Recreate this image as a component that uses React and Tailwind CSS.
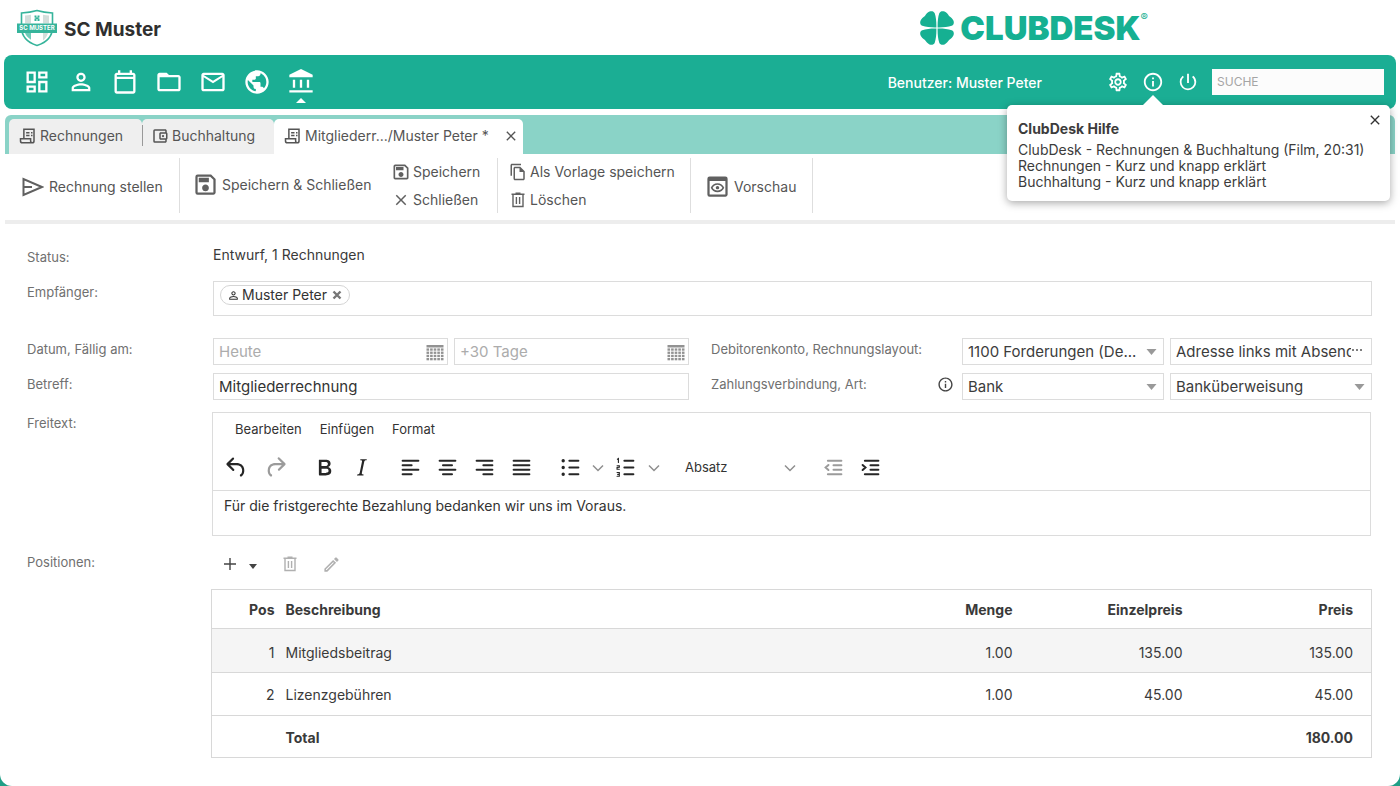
import React from 'react';
import {
  MdOutlineDashboard,
  MdPersonOutline,
  MdFolderOpen,
  MdMailOutline,
  MdPublic,
  MdOutlineSettings,
  MdInfoOutline,
  MdPowerSettingsNew,
  MdOutlineAccountBalanceWallet,
  MdOutlineSave,
  MdClose,
  MdOutlineFileCopy,
  MdOutlinePreview,
  MdOutlineEdit,
} from 'react-icons/md';

const BankIcon = ({ className = '' }) => (
  <svg viewBox="0 0 24 24" fill="currentColor" className={className}>
    <path d="M12 .8 2 5.800V8h20V5.800zM5 10h2v7H5zM11 10h2v7h-2zM17 10h2v7h-2zM2 19h20v2H2z" />
  </svg>
);

const CalendarIcon = ({ className = '' }) => (
  <svg viewBox="0 0 24 24" fill="currentColor" className={className}>
    <path fillRule="evenodd" d="M19 4h-1V2h-2v2H8V2H6v2H5c-1.100 0-2 .9-2 2v14c0 1.100.9 2 2 2h14c1.100 0 2-.9 2-2V6c0-1.100-.9-2-2-2zm0 16H5V9.500h14V20zM5 7.500V6h14v1.500z" />
  </svg>
);

const ReceiptIcon = ({ className = '' }) => (
  <svg viewBox="0 0 24 24" fill="none" stroke="currentColor" strokeWidth="2" className={className}>
    <path d="M6.500 15.500V3H20v15.500c0 1.400-1 2.500-2.300 2.500s-2.200-1.100-2.200-2.500v-3H2v3C2 19.900 3.100 21 4.500 21h13" />
    <path d="M9.500 7.500h4.500M16 7.500h2M9.500 11.200h4.500M16 11.200h2" />
  </svg>
);

const SendIcon = ({ className = '' }) => (
  <svg viewBox="0 0 22 20" fill="none" stroke="currentColor" strokeWidth="2" className={className}>
    <path d="M1.500 2v16L20 10 1.500 2zM1.500 10H10" />
  </svg>
);

const TrashIcon = ({ className = '' }) => (
  <svg viewBox="0 0 16 16" fill="none" stroke="currentColor" strokeWidth="1.400" className={className}>
    <path d="M1.500 2.200h13M5.500 1.200h5M3 2.500v12h10v-12M6.400 5v7M9.600 5v7" />
  </svg>
);

const CalendarGrid = ({ className = '' }) => (
  <svg viewBox="0 0 18 17" fill="currentColor" className={className}>
    <path d="M.5 1h17v2.500H.5z" />
    {[4.4, 7.6, 10.8, 14].map((y) =>
      [0.5, 4.1, 7.7, 11.3, 14.9].map((x) => <rect key={`${x}-${y}`} x={x} y={y} width="2.6" height="2.3" />)
    )}
  </svg>
);

const Triangle = ({ className = '' }) => (
  <svg viewBox="0 0 10 6" fill="currentColor" className={className}>
    <path d="M0 0h10L5 6z" />
  </svg>
);

const Chevron = ({ className = '' }) => (
  <svg viewBox="0 0 12 8" fill="none" stroke="currentColor" strokeWidth="1.500" className={className}>
    <path d="m1 1.500 5 5 5-5" />
  </svg>
);

const ClubLogo = () => (
  <svg viewBox="0 0 40 38" className="h-[38px] w-10">
    <path d="M20 1.500c5 1.500 10 2.200 15.500 2.500v14c0 10-6 15.500-15.500 18.500C10.500 33.500 4.500 28 4.500 18V4C10 3.700 15 3 20 1.500z" fill="#fff" stroke="#36b49b" strokeWidth="1.600" />
    <path d="M8 6.500c2-.1 4-.4 6-.8v8.800H8zM26 24h5c-1 3.500-2.500 5.500-5 7.400z" fill="#d3dedb" />
    <path d="M26 5.700c2 .4 4 .7 6 .8v8h-6z" fill="#d3dedb" />
    <path d="M8 24h6v6.800C10.500 28.500 9 26.500 8 24z" fill="#6fcbb8" />
    <path d="M17.500 6.500h2v2h1v-2h2v2h-1v1h1v2.500h-2v-2h-1v2h-2V9.500h1v-1h-1z" fill="#36b49b" />
    <path d="M0 14.500h40V24H0z" fill="#36b49b" />
    <text x="20" y="21.400" textAnchor="middle" fontSize="6" fontWeight="700" fill="#fff" fontFamily="Inter, sans-serif">
      SC MUSTER
    </text>
  </svg>
);

const leaf = 'M15.900 15.900C11 16 6 15.600 2.200 14.300C0 13.400-.2 11 .6 9.200C1.400 7.300 3 6 4.800 4.800C6 3 7.300 1.400 9.200.6C11-.2 13.400 0 14.300 2.200C15.600 6 16 11 15.900 15.900z';

const CloverIcon = () => (
  <svg viewBox="0 0 33 33" fill="#16b092" className="h-[34px] w-[34px]">
    {[0, 90, 180, 270].map((angle) => (
      <path key={angle} d={leaf} transform={`rotate(${angle} 16.500 16.500)`} />
    ))}
  </svg>
);

// 24px glyphs of the rich text editor
const filledIcons = {
  undo: 'M6.400 8H12c3.700 0 6.200 2 6.800 5.100.6 2.700-.4 5.600-2.300 6.800a1 1 0 0 1-1-1.800c1.100-.6 1.800-2.700 1.400-4.600-.5-2.100-2.100-3.500-4.900-3.500H6.400l3.300 3.300a1 1 0 1 1-1.400 1.400l-5-5a1 1 0 0 1 0-1.400l5-5a1 1 0 0 1 1.400 1.400L6.400 8z',
  redo: 'M17.600 10H12c-2.800 0-4.400 1.400-4.900 3.500-.4 2 .3 4 1.400 4.600a1 1 0 1 1-1 1.800c-2-1.200-2.900-4.100-2.300-6.800.6-3 3-5.100 6.800-5.100h5.600l-3.300-3.300a1 1 0 1 1 1.400-1.400l5 5a1 1 0 0 1 0 1.400l-5 5a1 1 0 0 1-1.400-1.400l3.300-3.300z',
  bold: 'M7.800 19c-.3 0-.5 0-.6-.2l-.2-.5V5.700c0-.2 0-.4.2-.5l.6-.2h5c1.500 0 2.700.3 3.500 1 .7.6 1.100 1.400 1.100 2.500a3 3 0 0 1-.6 1.900c-.4.6-1 1-1.600 1.200.4.1.9.3 1.300.6s.8.7 1 1.200c.4.4.5 1 .5 1.600 0 1.300-.4 2.300-1.300 3-.8.7-2.100 1-3.800 1H7.800zm5-8.300c.6 0 1.200-.1 1.600-.5.4-.3.6-.7.6-1.300 0-1.100-.8-1.700-2.300-1.700H9.300v3.500h3.400zm.5 6c.7 0 1.300-.1 1.700-.4.4-.4.6-.9.6-1.500s-.2-1-.7-1.400c-.4-.3-1-.4-2-.4H9.400v3.800h4z',
  italic: 'm16.700 4.700-.1.9h-.3c-.6 0-1 0-1.400.3-.3.3-.4.6-.5 1.100l-2.100 9.800v.6c0 .5.4.8 1.400.8h.2l-.2.8H8l.2-.8h.2c1.100 0 1.800-.5 2-1.500l2-9.800.1-.5c0-.6-.4-.8-1.400-.8h-.3l.2-.9h5.800z',
};

const strokeIcons = {
  left: 'M5 6h14M5 10h8M5 14h14M5 18h8',
  center: 'M5 6h14M8 10h8M5 14h14M8 18h8',
  right: 'M5 6h14M11 10h8M5 14h14M11 18h8',
  justify: 'M5 6h14M5 10h14M5 14h14M5 18h14',
  bullets: 'M11 6h8M11 12h8M11 18h8',
  numbers: 'M11 6h8M11 12h8M11 18h8',
  outdent: 'M7 6h12M12 10h7M12 14h7M7 18h12M7.500 9.800 5 12l2.500 2.200',
  indent: 'M7 6h12M12 10h7M12 14h7M7 18h12M5 9.800 7.500 12 5 14.200',
};

const EditorButton = ({ icon, label, muted = false }) => (
  <button
    type="button"
    aria-label={label}
    className={`flex h-8 w-[37px] items-center justify-center ${muted ? 'text-[#9b9b9b]' : 'text-[#262626]'}`}
  >
    {strokeIcons[icon] ? (
      <svg viewBox="0 0 24 24" fill="none" stroke="currentColor" strokeWidth="1.800" strokeLinecap="round" className="h-[27px] w-[27px]">
        <path d={strokeIcons[icon]} />
        {icon === 'bullets' && <path strokeWidth="3" d="M5.500 6h.01M5.500 12h.01M5.500 18h.01" />}
        {icon === 'numbers' && (
          <path strokeWidth="1" d="m4.800 4.700.9-.6v3.400M4.500 10.400h2v1.300l-2 .3v1.500h2M4.500 16.400h2v3.400h-2M5 18.100h1.500" />
        )}
      </svg>
    ) : (
      <svg viewBox="0 0 24 24" fill="currentColor" className="h-[27px] w-[27px]">
        <path fillRule="evenodd" d={filledIcons[icon]} />
      </svg>
    )}
  </button>
);

const navItems = [
  { label: 'Dashboard', Icon: MdOutlineDashboard },
  { label: 'Kontakte', Icon: MdPersonOutline },
  { label: 'Kalender', Icon: CalendarIcon },
  { label: 'Dateien', Icon: MdFolderOpen },
  { label: 'E-Mail', Icon: MdMailOutline },
  { label: 'Website', Icon: MdPublic },
  { label: 'Finanzen', Icon: BankIcon, active: true },
];

const positions = [
  { pos: 1, text: 'Mitgliedsbeitrag', amount: '1.00', unit: '135.00', price: '135.00' },
  { pos: 2, text: 'Lizenzgebühren', amount: '1.00', unit: '45.00', price: '45.00' },
];

const ToolbarButton = ({ Icon, iconClass, children, className = '' }) => (
  <button type="button" className={`flex items-center whitespace-nowrap ${className}`}>
    <Icon className={`shrink-0 text-[#606060] ${iconClass}`} />
    {children}
  </button>
);

const DateField = ({ label, placeholder }) => (
  <div className="flex h-[27px] min-w-0 flex-1 items-center border border-[#dcdcdc] bg-white pr-[3px] pl-[5px]">
    <input aria-label={label} placeholder={placeholder} className="w-full min-w-0 text-[15px] placeholder-[#acacac] outline-none" />
    <button type="button" aria-label={`${label} wählen`} className="pt-[2px] text-[#929292]">
      <CalendarGrid className="h-[17px] w-[18px]" />
    </button>
  </div>
);

const SelectField = ({ label, value, dots = false }) => (
  <div className="flex h-[27px] min-w-0 flex-1 items-center border border-[#dcdcdc] bg-white pr-[6px] pl-[5px]">
    <select aria-label={label} className="min-w-0 flex-1 appearance-none overflow-hidden text-[15px] text-[#3c3c3c] outline-none">
      <option>{value}</option>
    </select>
    {dots ? (
      <svg viewBox="0 0 12 4" fill="#555" className="mr-[2px] mb-1 h-1 w-3 shrink-0">
        <circle cx="2" cy="2" r="1" />
        <circle cx="6" cy="2" r="1" />
        <circle cx="10" cy="2" r="1" />
      </svg>
    ) : (
      <Triangle className="h-[6px] w-[11px] shrink-0 text-[#999]" />
    )}
  </div>
);

const HelpPopover = () => (
  <div className="absolute top-[50px] right-[6px] z-10 w-[383px] rounded-[5px] bg-white px-[11px] pt-[14px] pb-[11px] text-[#3c3c3c] shadow-[0_2px_8px_rgba(0,0,0,0.35)]">
    <svg viewBox="0 0 22 11" fill="#fff" className="absolute -top-[10px] left-[135px] h-[11px] w-[22px]">
      <path d="M11 0 22 11H0z" />
    </svg>
    <button type="button" aria-label="Hilfe schließen" className="absolute top-[7px] right-[7px] text-[#333]">
      <MdClose className="h-4 w-4" />
    </button>
    <h2 className="mb-[3px] text-[14px] leading-5 font-bold">ClubDesk Hilfe</h2>
    <ul className="text-[14px] leading-4 whitespace-nowrap">
      <li><a href="#film">ClubDesk - Rechnungen &amp; Buchhaltung (Film, 20:31)</a></li>
      <li><a href="#rechnungen">Rechnungen - Kurz und knapp erklärt</a></li>
      <li><a href="#buchhaltung">Buchhaltung - Kurz und knapp erklärt</a></li>
    </ul>
  </div>
);

const Header = () => (
  <header>
    <div className="flex h-[55px] items-center pr-[252px] pl-[17px]">
      <ClubLogo />
      <span className="ml-[7px] pt-[6px] text-[19px] font-bold text-[#2f2f2f]">SC Muster</span>
      <div className="ml-auto flex items-center text-[#16b092]">
        <CloverIcon />
        <span className="ml-[6px] pt-[2px] text-[33px] leading-none font-black">CLUBDESK</span>
        <span className="self-start pt-[2px] text-[11px] leading-none">®</span>
      </div>
    </div>

    <div className="relative mx-1 flex h-[54px] items-center rounded-lg bg-[#1bae94] pr-3 pl-[19px] text-white">
      <nav className="flex gap-4">
        {navItems.map(({ label, Icon, active }) => (
          <a key={label} href="#nav" aria-label={label} className="relative block">
            <Icon className="h-7 w-7" />
            {active && (
              <svg viewBox="0 0 10 5" fill="currentColor" className="absolute -bottom-[7px] left-[9px] h-[5px] w-[10px]">
                <path d="M5 0l5 5H0z" />
              </svg>
            )}
          </a>
        ))}
      </nav>
      <span className="mr-[65px] ml-auto text-[14px] font-medium">Benutzer: Muster Peter</span>
      <div className="flex gap-[13px]">
        <button type="button" aria-label="Einstellungen"><MdOutlineSettings className="h-[22px] w-[22px]" /></button>
        <button type="button" aria-label="Hilfe"><MdInfoOutline className="h-[22px] w-[22px]" /></button>
        <button type="button" aria-label="Abmelden"><MdPowerSettingsNew className="h-[22px] w-[22px]" /></button>
      </div>
      <input
        type="search"
        aria-label="Suche"
        placeholder="SUCHE"
        className="ml-[13px] h-[26px] w-[172px] bg-[#fcfcfc] px-[5px] pb-[2px] text-[12px] text-[#333] placeholder-[#a5a5a5] outline-none"
      />
      <HelpPopover />
    </div>
  </header>
);

const Tabs = () => (
  <div className="mx-[5px] mt-[6px] flex h-[39px] items-end rounded-t-md bg-[#8ad3c7] pl-1 text-[14px] text-[#555]">
    <a href="#rechnungen" className="flex h-[35px] w-[133px] items-center rounded-t-[5px] bg-[#efefef] pb-[2px] pl-[10px]">
      <ReceiptIcon className="mr-[3px] h-[18px] w-[18px]" />
      Rechnungen
    </a>
    <a href="#buchhaltung" className="flex h-[35px] w-[132px] items-center rounded-t-[5px] bg-[#efefef] pb-[2px]">
      <span className="h-[21px] w-px bg-[#999]" />
      <MdOutlineAccountBalanceWallet className="mr-[3px] ml-2 h-[18px] w-[18px]" />
      Buchhaltung
    </a>
    <div className="flex h-[35px] w-[249px] items-center rounded-t-[5px] bg-white pr-1 pb-[2px] pl-[10px]">
      <ReceiptIcon className="mr-[3px] h-[18px] w-[18px]" />
      Mitgliederr.../Muster Peter *
      <button type="button" aria-label="Tab schließen" className="ml-auto"><MdClose className="h-4 w-4" /></button>
    </div>
  </div>
);

const Toolbar = () => (
  <div className="mx-[5px] flex h-[70px] border-b-4 border-[#ededed] pt-1 pb-[7px] text-[14px] text-[#555]">
    <div className="flex w-[175px] items-center border-r border-[#dedede] pt-[2px] pl-[17px]">
      <ToolbarButton Icon={SendIcon} iconClass="mr-[5px] h-5 w-[22px]">Rechnung stellen</ToolbarButton>
    </div>
    <div className="flex w-[318px] items-center border-r border-[#dedede] pl-3">
      <ToolbarButton Icon={MdOutlineSave} iconClass="mr-[3px] h-[27px] w-[27px]" className="w-[199px] pb-[2px]">Speichern &amp; Schließen</ToolbarButton>
      <div className="flex flex-col gap-[7px]">
        <ToolbarButton Icon={MdOutlineSave} iconClass="mr-[2px] h-5 w-5">Speichern</ToolbarButton>
        <ToolbarButton Icon={MdClose} iconClass="mr-[3px] ml-[1px] h-[18px] w-[18px]">Schließen</ToolbarButton>
      </div>
    </div>
    <div className="flex w-[193px] flex-col justify-center gap-[7px] border-r border-[#dedede] pl-[11px]">
      <ToolbarButton Icon={MdOutlineFileCopy} iconClass="mr-[3px] h-[18px] w-[18px]">Als Vorlage speichern</ToolbarButton>
      <ToolbarButton Icon={TrashIcon} iconClass="mr-[4px] ml-[1px] h-4 w-4">Löschen</ToolbarButton>
    </div>
    <div className="flex w-[122px] items-center border-r border-[#dedede] pt-[2px] pl-[13px]">
      <ToolbarButton Icon={MdOutlinePreview} iconClass="mr-[3px] h-[27px] w-[27px]">Vorschau</ToolbarButton>
    </div>
  </div>
);

const Editor = () => (
  <div className="mr-px -ml-px border border-[#dcdcdc] bg-white text-[#333]">
    <div className="flex gap-[18px] pt-[6px] pl-[22px] text-[13px] leading-5">
      <button type="button">Bearbeiten</button>
      <button type="button">Einfügen</button>
      <button type="button">Format</button>
    </div>
    <div className="flex h-[52px] items-center gap-3 border-b border-[#dcdcdc] pt-[6px] pl-[5px]">
      <div className="flex gap-[2px]">
        <EditorButton icon="undo" label="Rückgängig" />
        <EditorButton icon="redo" label="Wiederholen" muted />
      </div>
      <div className="flex">
        <EditorButton icon="bold" label="Fett" />
        <EditorButton icon="italic" label="Kursiv" />
      </div>
      <div className="flex">
        <EditorButton icon="left" label="Linksbündig" />
        <EditorButton icon="center" label="Zentriert" />
        <EditorButton icon="right" label="Rechtsbündig" />
        <EditorButton icon="justify" label="Blocksatz" />
      </div>
      <div className="flex items-center text-[#8f8f8f]">
        <EditorButton icon="bullets" label="Aufzählung" />
        <button type="button" aria-label="Aufzählungsart" className="flex w-[18px] justify-center"><Chevron className="h-2 w-3" /></button>
        <EditorButton icon="numbers" label="Nummerierung" />
        <button type="button" aria-label="Nummerierungsart" className="flex w-5 justify-center"><Chevron className="h-2 w-3" /></button>
      </div>
      <button type="button" className="ml-[9px] flex w-[111px] items-center justify-between text-[13px]">
        Absatz
        <Chevron className="h-2 w-3 text-[#8f8f8f]" />
      </button>
      <div className="ml-[7px] flex">
        <EditorButton icon="outdent" label="Einzug verkleinern" muted />
        <EditorButton icon="indent" label="Einzug vergrößern" />
      </div>
    </div>
    <div contentEditable suppressContentEditableWarning role="textbox" aria-label="Freitext" className="h-11 px-[11px] pt-[5px] text-[14px] leading-5 outline-none">
      Für die fristgerechte Bezahlung bedanken wir uns im Voraus.
    </div>
  </div>
);

const PositionsTable = () => (
  <table className="-ml-[2px] w-[calc(100%+2px)] border-collapse border border-[#d8d8d8] bg-white text-right text-[14px] text-[#3a3a3a]">
    <thead>
      <tr className="h-[39px] border-b border-[#d8d8d8]">
        <th className="w-[63px]">Pos</th>
        <th className="pl-[11px] text-left">Beschreibung</th>
        <th className="w-[170px]">Menge</th>
        <th className="w-[170px]">Einzelpreis</th>
        <th className="w-[189px] pr-[18px]">Preis</th>
      </tr>
    </thead>
    <tbody>
      {positions.map((row) => (
        <tr key={row.pos} className="h-[43px] border-b border-[#d8d8d8] odd:h-11 odd:bg-[#f5f5f5] odd:*:pt-[3px]">
          <td>{row.pos}</td>
          <td className="pl-[11px] text-left">{row.text}</td>
          <td>{row.amount}</td>
          <td>{row.unit}</td>
          <td className="pr-[18px]">{row.price}</td>
        </tr>
      ))}
    </tbody>
    <tfoot>
      <tr className="h-[42px] font-bold *:pt-[2px]">
        <td />
        <td className="pl-[11px] text-left">Total</td>
        <td colSpan={3} className="pr-[18px]">180.00</td>
      </tr>
    </tfoot>
  </table>
);

const Row = ({ label, htmlFor, className = '', children }) => (
  <div className={`grid grid-cols-[186px_minmax(0,1fr)] ${className}`}>
    <label htmlFor={htmlFor} className="text-[13px] leading-[22px] text-[#707070]">{label}</label>
    <div>{children}</div>
  </div>
);

const splitRow = 'grid grid-cols-[186px_minmax(0,476fr)_273px_minmax(0,410fr)] text-[13px] leading-[22px] text-[#707070]';

const InvoiceForm = () => (
  <main className="pr-7 pb-7 pl-[27px]">
    <Row label="Status:" className="pt-[22px]">
      <p className="text-[14px] leading-[18px] text-[#3a3a3a]">Entwurf, 1 Rechnungen</p>
    </Row>

    <Row label="Empfänger:" className="mt-[13px]">
      <div className="h-[35px] border border-[#dcdcdc] bg-white px-[6px] pt-[3px]">
        <span className="flex h-5 w-fit items-center rounded-full border border-[#d5d5d5] pr-[7px] pl-[6px] text-[14px] leading-none text-[#333]">
          <MdPersonOutline className="mr-[2px] h-[13px] w-[13px]" />
          Muster Peter
          <button type="button" aria-label="Muster Peter entfernen" className="ml-[5px] text-[#777]">
            <svg viewBox="0 0 10 10" stroke="currentColor" strokeWidth="2.400" className="h-[10px] w-[10px]">
              <path d="m1.500 1.500 7 7M8.500 1.500l-7 7" />
            </svg>
          </button>
        </span>
      </div>
    </Row>

    <div className={`${splitRow} mt-[22px]`}>
      <span>Datum, Fällig am:</span>
      <div className="flex gap-[6px]">
        <DateField label="Datum" placeholder="Heute" />
        <DateField label="Fällig am" placeholder="+30 Tage" />
      </div>
      <span className="pl-[22px]">Debitorenkonto, Rechnungslayout:</span>
      <div className="flex gap-[6px]">
        <SelectField label="Debitorenkonto" value="1100 Forderungen (De..." />
        <SelectField label="Rechnungslayout" value="Adresse links mit Absender" dots />
      </div>
    </div>

    <div className={`${splitRow} mt-2`}>
      <label htmlFor="betreff">Betreff:</label>
      <input
        id="betreff"
        defaultValue="Mitgliederrechnung"
        className="h-[27px] w-full min-w-0 border border-[#dcdcdc] bg-white px-[5px] text-[15px] text-[#333] outline-none"
      />
      <span className="flex items-start justify-between pr-2 pl-[22px]">
        Zahlungsverbindung, Art:
        <MdInfoOutline className="mt-[3px] h-[17px] w-[17px] text-[#444]" />
      </span>
      <div className="flex gap-[6px]">
        <SelectField label="Zahlungsverbindung" value="Bank" />
        <SelectField label="Zahlungsart" value="Banküberweisung" />
      </div>
    </div>

    <Row label="Freitext:" className="mt-3">
      <Editor />
    </Row>

    <Row label="Positionen:" className="mt-[15px]">
      <div className="flex h-[26px] items-center pl-[10px] text-[#b0b0b0]">
        <button type="button" aria-label="Position hinzufügen" className="flex items-center gap-3 text-[#444]">
          <svg viewBox="0 0 14 14" stroke="currentColor" strokeWidth="1.400" className="h-[14px] w-[14px]">
            <path d="M7 1v12M1 7h12" />
          </svg>
          <Triangle className="mt-1 h-[5px] w-2" />
        </button>
        <button type="button" aria-label="Position löschen" className="ml-[25px]"><TrashIcon className="h-4 w-4" /></button>
        <button type="button" aria-label="Position bearbeiten" className="ml-6"><MdOutlineEdit className="h-[19px] w-[19px]" /></button>
      </div>
      <div className="mt-3">
        <PositionsTable />
      </div>
    </Row>
  </main>
);

const App = () => (
  <div className="min-h-screen bg-[#1f9f86] font-[Inter,'Liberation_Sans',sans-serif]">
    <div className="min-h-screen rounded-b-[12px] bg-white">
      <Header />
      <Tabs />
      <Toolbar />
      <InvoiceForm />
    </div>
  </div>
);

export default App;
